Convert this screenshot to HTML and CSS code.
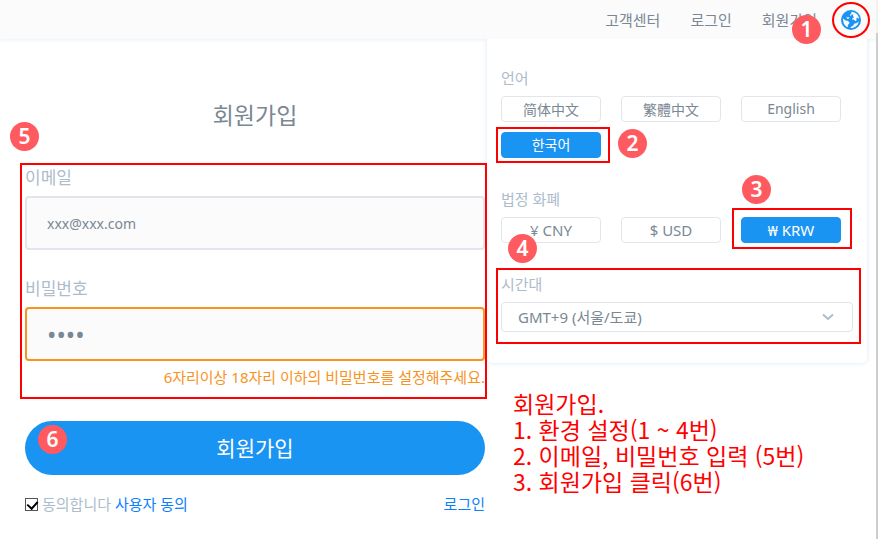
FILE: index.html
```
<!DOCTYPE html>
<html lang="ko">
<head>
<meta charset="utf-8">
<meta name="viewport" content="width=device-width, initial-scale=1">
<title>회원가입</title>
<link rel="stylesheet" href="styles.css">
</head>
<body>
<header class="topbar">
  <nav class="nav">
    <a href="#">고객센터</a>
    <a href="#">로그인</a>
    <a href="#" class="anchor">회원가입<span class="badge badge-1">1</span></a>
  </nav>
  <button class="globe anchor" type="button" aria-label="환경 설정">
    <svg viewBox="0 0 20 20" width="20" height="20" aria-hidden="true">
      <circle cx="10" cy="10" r="10" fill="#1a94f3"/>
      <path fill="#fbfbfb" d="M10.6 1.8 13.6 2.4 16.4 4.5 18 7.6 17.2 9 16.4 7.6 15.2 8.4 15.8 10 14.6 11.2 12.8 9.6 11.2 9.8 11.6 8 13.2 7.2 11.8 6 12.4 4.4 10.8 4.6 9.6 6 8.8 5.2 10.2 3.6z"/>
      <path fill="#fbfbfb" d="M1.9 8.6 3.4 9.4 4.6 10.6 6.6 10.8 8.4 12.2 8.2 13.8 6.8 15 6.9 17.2 4.8 16.2 2.7 13.6z"/>
      <path fill="#fbfbfb" d="M5.2 6.6 6.8 7.4 8.6 7 8 8.6 6.4 9z"/>
      <path fill="#fbfbfb" d="M17.9 11.6 16.8 14.4 14.4 16.8 11.4 18 9.4 17.9 10.4 16.4 12.4 15.6 13 13.8 15.2 13.2z"/>
    </svg>
  </button>
</header>

<main class="page">
  <form class="signup">
    <h1 class="title">회원가입</h1>
    <div class="fields anchor frame frame-fields">
      <span class="badge badge-5">5</span>
      <div class="field">
        <label for="email">이메일</label>
        <input id="email" type="text" value="xxx@xxx.com">
      </div>
      <div class="field invalid">
        <label for="password">비밀번호</label>
        <input id="password" type="password" value="1234">
        <p class="error">6자리이상 18자리 이하의 비밀번호를 설정해주세요.</p>
      </div>
    </div>
    <button class="submit anchor" type="button">회원가입<span class="badge badge-6">6</span></button>
    <div class="links">
      <div class="agree">
        <input id="agree" type="checkbox" checked>
        <label for="agree">동의합니다</label>
        <a href="#">사용자 동의</a>
      </div>
      <a href="#">로그인</a>
    </div>
  </form>

  <div class="side">
    <section class="panel">
      <div class="group">
        <h2 class="label">언어</h2>
        <div class="options">
          <button type="button" class="option" lang="zh-CN">简体中文</button>
          <button type="button" class="option" lang="zh-TW">繁體中文</button>
          <button type="button" class="option" lang="en">English</button>
          <button type="button" class="option selected anchor frame frame-language">한국어<span class="badge badge-2">2</span></button>
        </div>
      </div>
      <div class="group">
        <h2 class="label">법정 화폐</h2>
        <div class="options currencies">
          <button type="button" class="option anchor">¥ CNY<span class="badge badge-4">4</span></button>
          <button type="button" class="option">$ USD</button>
          <button type="button" class="option selected anchor frame frame-currency">₩ KRW<span class="badge badge-3">3</span></button>
        </div>
      </div>
      <div class="group anchor frame frame-zone">
        <label class="label" for="zone">시간대</label>
        <div class="picker">
          <select id="zone"><option>GMT+9 (서울/도쿄)</option></select>
          <svg class="chevron" viewBox="0 0 12 8" width="12" height="8" aria-hidden="true"><path d="M1 1.5 6 6l5-4.5" fill="none" stroke="#adbccc" stroke-width="2"/></svg>
        </div>
      </div>
    </section>
    <section class="notes">
      <p>회원가입.</p>
      <p>1. 환경 설정(1 ~ 4번)</p>
      <p>2. 이메일, 비밀번호 입력 (5번)</p>
      <p>3. 회원가입 클릭(6번)</p>
    </section>
  </div>
</main>
<div class="scrollbar"></div>
</body>
</html>
```
FILE: styles.css
```
* { box-sizing: border-box; }
body {
  margin: 0;
  background: #fff;
  color: #7a8794;
  font: 15px/20px "Noto Sans", "Noto Sans CJK KR", sans-serif;
}
h1, h2, p { margin: 0; font-weight: 400; }
button, input, select { font: inherit; color: inherit; margin: 0; }
button { padding: 0; border: 0; background: none; cursor: pointer; }
a { color: #0b80ff; text-decoration: none; }

.topbar {
  display: flex;
  justify-content: flex-end;
  align-items: center;
  gap: 24px;
  height: 39px;
  padding-right: 17px;
  background: #fbfbfb;
  box-shadow: 0 1px 4px #e8f0f8;
}
.nav { display: flex; gap: 30px; }
.nav a { color: #7a8794; }
.globe { display: flex; }
.globe::after {
  content: "";
  position: absolute;
  inset: -8px -9px;
  border: 2px solid #f00;
  border-radius: 50%;
}

.page {
  display: grid;
  grid-template-columns: 1fr 380px;
  gap: 2px;
  padding: 0 11px 0 25px;
}
.title {
  padding: 60px 0 35px;
  font-size: 23px;
  line-height: 32px;
  text-align: center;
}
.fields { display: grid; gap: 27px; }
.field label {
  display: block;
  margin-bottom: 6px;
  color: #adbccc;
  font-size: 17px;
  line-height: 24px;
}
.field input {
  display: block;
  width: 100%;
  height: 54px;
  padding: 0 20px;
  border: 2px solid #e1e6ec;
  border-radius: 4px;
  background: #fbfbfb;
  font-size: 14px;
  outline: 0;
}
.field.invalid input { border-color: #f7931e; font-size: 25px; }
.error { margin-top: 6px; color: #f7931e; text-align: right; }
.submit {
  width: 100%;
  height: 54px;
  margin-top: 34px;
  border-radius: 27px;
  background: #1a94f3;
  color: #fff;
  font-size: 21px;
}
.links {
  display: flex;
  justify-content: space-between;
  margin-top: 19px;
}
.agree { display: flex; align-items: center; gap: 4px; color: #adbccc; }
.agree input {
  appearance: none;
  width: 13px;
  height: 13px;
  border: 1px solid #555;
  background: #fff;
}
.agree input:checked::after {
  content: "";
  display: block;
  width: 5px;
  height: 8px;
  margin-left: 3px;
  border: solid #000;
  border-width: 0 2px 2px 0;
  transform: rotate(42deg);
}

.panel {
  display: grid;
  gap: 30px;
  padding: 28px 14px 31px;
  border-radius: 0 0 5px 5px;
  background: #fff;
  box-shadow: 0 0 5px #dbe6f2;
  clip-path: inset(0 -8px -8px -8px);
}
.label {
  display: block;
  margin-bottom: 7px;
  color: #adbccc;
  font-size: 15px;
  line-height: 22px;
}
.options { display: flex; flex-wrap: wrap; gap: 10px 20px; }
.option {
  width: 100px;
  height: 26px;
  border: 1px solid #e1e6ec;
  border-radius: 4px;
  font-size: 14px;
}
.currencies .option { font-size: 15px; }
.option[lang="zh-CN"] { font-family: "Noto Sans CJK SC", sans-serif; }
.option[lang="zh-TW"] { font-family: "Noto Sans CJK TC", sans-serif; }
.option.selected { border-color: #1a94f3; background: #1a94f3; color: #fff; }
.picker { position: relative; }
.picker select {
  display: block;
  width: 100%;
  height: 30px;
  padding: 0 16px;
  border: 1px solid #e1e6ec;
  border-radius: 4px;
  background: #fff;
  appearance: none;
}
.chevron { position: absolute; top: 11px; right: 19px; }

.notes {
  margin: 27px 0 0 26px;
  color: #f00;
  font: 300 23px/26px "Noto Sans CJK KR", sans-serif;
}

.anchor { position: relative; }
.frame::after {
  content: "";
  position: absolute;
  z-index: 2;
  border: 2px solid #f00;
  pointer-events: none;
}
.frame-fields::after { inset: -3px -2px -12px -5px; }
.frame-language::after { inset: -6px -10px -6px -6px; }
.frame-currency::after { inset: -10px -12px -7px -10px; }
.frame-zone::after { inset: -5px -8px -12px -5px; }
.badge {
  position: absolute;
  z-index: 3;
  width: 29px;
  height: 29px;
  border-radius: 50%;
  background: #ff5a5f;
  color: #fff;
  font: 600 21px/29px "Noto Sans", sans-serif;
  text-align: center;
}
.badge-1 { top: 5px; right: -4px; }
.badge-2 { top: -4px; right: -47px; }
.badge-3 { top: -43px; left: 0; }
.badge-4 { top: 16px; left: 6px; }
.badge-5 { top: -44px; left: -15px; }
.badge-6 { top: 4px; left: 13px; }

.scrollbar {
  position: fixed;
  z-index: 4;
  top: 0;
  right: 0;
  bottom: 0;
  width: 2px;
  border-top: 33px solid #f1f1f1;
  background: #cdcdcd;
}
```
